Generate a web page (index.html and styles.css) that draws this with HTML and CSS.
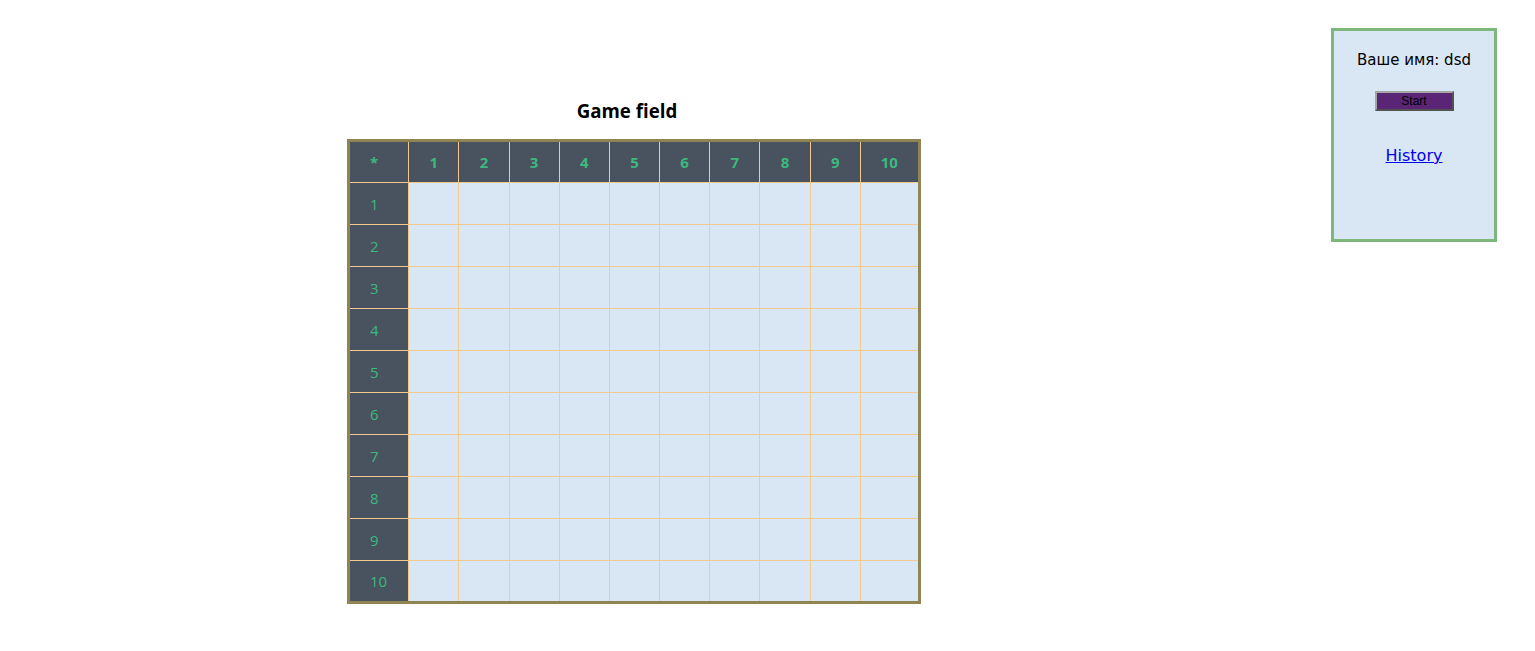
FILE: index.html
```html
<!DOCTYPE html>
<html>
<head>
<meta charset="utf-8">
<link rel="stylesheet" href="styles.css">
</head>
<body>
<div class="page">
  <div class="game">
    <h2 class="title">Game field</h2>
    <table class="field">
      <colgroup>
        <col class="c-head"><col class="c"><col class="c"><col class="c"><col class="c"><col class="c"><col class="c"><col class="c"><col class="c"><col class="c"><col class="c-last">
      </colgroup>
      <thead>
        <tr><th class="corner">*</th><th>1</th><th>2</th><th>3</th><th>4</th><th>5</th><th>6</th><th>7</th><th>8</th><th>9</th><th>10</th></tr>
      </thead>
      <tbody>
        <tr><th>1</th><td></td><td></td><td></td><td></td><td></td><td></td><td></td><td></td><td></td><td></td></tr>
        <tr><th>2</th><td></td><td></td><td></td><td></td><td></td><td></td><td></td><td></td><td></td><td></td></tr>
        <tr><th>3</th><td></td><td></td><td></td><td></td><td></td><td></td><td></td><td></td><td></td><td></td></tr>
        <tr><th>4</th><td></td><td></td><td></td><td></td><td></td><td></td><td></td><td></td><td></td><td></td></tr>
        <tr><th>5</th><td></td><td></td><td></td><td></td><td></td><td></td><td></td><td></td><td></td><td></td></tr>
        <tr><th>6</th><td></td><td></td><td></td><td></td><td></td><td></td><td></td><td></td><td></td><td></td></tr>
        <tr><th>7</th><td></td><td></td><td></td><td></td><td></td><td></td><td></td><td></td><td></td><td></td></tr>
        <tr><th>8</th><td></td><td></td><td></td><td></td><td></td><td></td><td></td><td></td><td></td><td></td></tr>
        <tr><th>9</th><td></td><td></td><td></td><td></td><td></td><td></td><td></td><td></td><td></td><td></td></tr>
        <tr><th>10</th><td></td><td></td><td></td><td></td><td></td><td></td><td></td><td></td><td></td><td></td></tr>
      </tbody>
    </table>
  </div>
  <div class="panel">
    <div class="name">Ваше имя: dsd</div>
    <button class="start">Start</button>
    <a class="history" href="#">History</a>
  </div>
</div>
</body>
</html>
```

FILE: styles.css
```css
body {
  margin: 8px;
  font-family: "DejaVu Sans", Verdana, sans-serif;
  background: #ffffff;
}
.page {
  display: flex;
  justify-content: space-between;
  align-items: flex-start;
  padding-right: 30px;
  padding-top: 20px;
}
.game {
  margin-left: 339px;
  margin-top: 71px;
  width: 560px;
  display: flex;
  flex-direction: column;
}
.title {
  margin: 0 0 16px 0;
  text-align: center;
  font-family: "Open Sans", sans-serif;
  font-size: 18.7px;
  font-weight: bold;
  color: #000;
  line-height: 24px;
}
.field {
  border-collapse: collapse;
  border: 3px solid #8f8554;
  table-layout: fixed;
  width: 574px;
}
.c-head { width: 60px; }
.c { width: 50px; }
.c-last { width: 59px; }
.field th, .field td {
  border: 1px solid #f3c98c;
  height: 41px;
  padding: 0;
  box-sizing: border-box;
}
.field tbody tr { height: 42px; }
.field thead tr { height: 42px; }
.field th {
  background: #48535f;
  color: #3cb97d;
  font-family: "Open Sans", sans-serif;
  text-align: center;
}
.field thead th {
  font-weight: bold;
  font-size: 15px;
}
.field tbody th,
.field thead th.corner {
  text-align: left;
  padding-left: 20px;
}
.field tbody th {
  font-weight: normal;
  font-size: 15px;
}
.field td {
  background: #d9e6f3;
}
.panel {
  width: 160px;
  height: 208px;
  border: 3px solid #7db77b;
  background: #d9e6f3;
  display: flex;
  flex-direction: column;
  align-items: center;
}
.name {
  margin-top: 20px;
  font-size: 15px;
  color: #000;
  line-height: 18px;
}
.start {
  margin-top: 22px;
  width: 79px;
  height: 20px;
  padding: 0;
  background: #5a2574;
  border: 2px outset #a6a6a6;
  font-family: "Liberation Sans", Arial, sans-serif;
  font-size: 12px;
  color: #000;
}
.history {
  margin-top: 35px;
  font-family: "DejaVu Sans", Verdana, sans-serif;
  font-size: 16px;
  color: #0000ee;
  text-decoration: underline;
}
```
